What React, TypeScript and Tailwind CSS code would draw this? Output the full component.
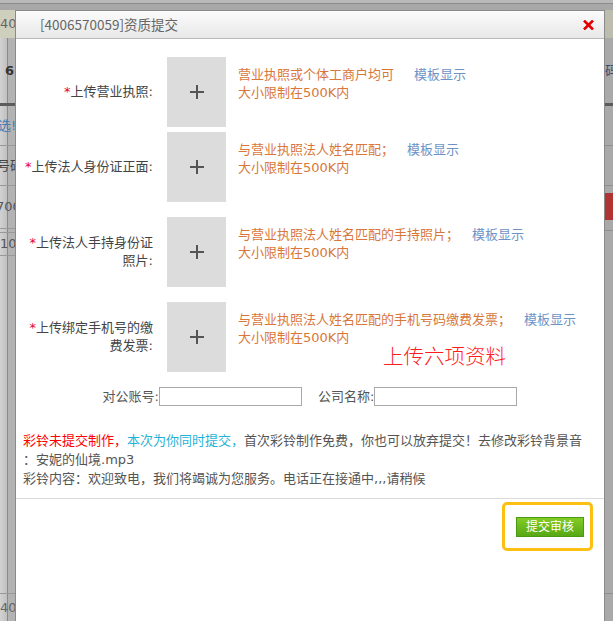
import React from 'react';

interface UploadRow {
  label: string[];
  tip: string;
  linkGap: string;
  mt: string;
  extra?: boolean;
}

const rows: UploadRow[] = [
  { label: ['上传营业执照:'], tip: '营业执照或个体工商户均可', linkGap: 'ml-[20px]', mt: '' },
  { label: ['上传法人身份证正面:'], tip: '与营业执照法人姓名匹配；', linkGap: 'ml-[13px]', mt: 'mt-[5px]' },
  { label: ['上传法人手持身份证', '照片:'], tip: '与营业执照法人姓名匹配的手持照片；', linkGap: 'ml-[13px]', mt: 'mt-[15px]' },
  { label: ['上传绑定手机号的缴', '费发票:'], tip: '与营业执照法人姓名匹配的手机号码缴费发票；', linkGap: 'ml-[13px]', mt: 'mt-[15px]', extra: true },
];

function Plus() {
  return (
    <svg width="14" height="14" viewBox="0 0 14 14">
      <path d="M7 0v14M0 7h14" stroke="#555" strokeWidth="2" />
    </svg>
  );
}

function CloseX() {
  return (
    <svg width="11" height="10" viewBox="0 0 11 10">
      <path d="M1 0.5l9 9M10 0.5l-9 9" stroke="#e30000" strokeWidth="2.6" />
    </svg>
  );
}

// page behind the modal mask, only the thin edges show
function LeftStrip() {
  return (
    <div className="w-[15px] flex flex-col overflow-hidden bg-[linear-gradient(to_right,#d2d2d2_0px,#c0c0c0_7px,#8a8a8a_7px,#8a8a8a_8px,#b3b3b3_8px)] text-[13px] leading-[18px]">
      <div className="h-[28px] shrink-0 flex items-center bg-[#cfcfbd] text-[#666] whitespace-nowrap">40</div>
      <div className="h-[65px] shrink-0 flex items-center pl-[5px] font-bold text-[#333]">6</div>
      <div className="h-[3px] shrink-0 bg-[#5b5b5b]" />
      <div className="h-[39px] shrink-0 flex items-center -ml-[2px] text-[#4b7bb3] whitespace-nowrap">选!</div>
      <div className="h-px shrink-0 bg-[#999]" />
      <div className="h-[39px] shrink-0 flex items-center -ml-[3px] text-[#444] whitespace-nowrap">号码</div>
      <div className="h-px shrink-0 bg-[#999]" />
      <div className="h-[42px] shrink-0 flex items-center -ml-[4px] text-[#555] whitespace-nowrap">700</div>
      <div className="h-px shrink-0 bg-[#999]" />
      <div className="h-[3px] shrink-0" />
      <div className="h-px shrink-0 bg-[#999]" />
      <div className="h-[22px] shrink-0 flex items-center text-[#555] whitespace-nowrap">10</div>
      <div className="h-px shrink-0 bg-[#999]" />
      <div className="h-[337px] shrink-0" />
      <div className="h-px shrink-0 bg-[#999]" />
      <div className="h-[27px] shrink-0 flex items-center text-[#666] whitespace-nowrap">40</div>
    </div>
  );
}

function RightStrip() {
  return (
    <div className="w-[8px] flex flex-col overflow-hidden bg-[#a9a9a9] text-[13px] leading-[18px]">
      <div className="h-[28px] shrink-0 bg-[#bdbdae]" />
      <div className="h-[65px] shrink-0 flex items-center text-[#3a4a70] whitespace-nowrap">码</div>
      <div className="h-[3px] shrink-0 bg-[#5b5b5b]" />
      <div className="h-[39px] shrink-0" />
      <div className="h-px shrink-0 bg-[#8f8f8f]" />
      <div className="h-[39px] shrink-0" />
      <div className="h-px shrink-0 bg-[#8f8f8f]" />
      <div className="h-[7px] shrink-0" />
      <div className="h-[27px] shrink-0 bg-[#b03434]" />
      <div className="h-[10px] shrink-0" />
      <div className="h-px shrink-0 bg-[#8f8f8f]" />
      <div className="h-[362px] shrink-0" />
      <div className="h-px shrink-0 bg-[#8f8f8f]" />
    </div>
  );
}

function Dialog() {
  return (
    <div className="absolute left-[15px] top-[10px] w-[590px] h-[620px] border border-[#8a8a8a] bg-white">
      <div className="h-[28px] flex items-center justify-between pl-[24px] pr-[10px] border-b border-[#b8b8b8] bg-gradient-to-b from-[#fbfbfb] to-[#e8e8e8]">
        <span className="text-[13.5px] text-[#666] font-[family-name:Noto_Sans_CJK_SC,sans-serif]">[4006570059]资质提交</span>
        <CloseX />
      </div>

      <div className="pt-[18px]">
        {rows.map((row, i) => (
          <div key={i} className={`flex ${row.mt}`}>
            <div className="w-[137px] flex items-center justify-end text-right text-[13px] leading-[18px] text-[#444]">
              <div>
                <span className="text-[#e6003c]">*</span>
                {row.label[0]}
                {row.label[1] && (
                  <>
                    <br />
                    {row.label[1]}
                  </>
                )}
              </div>
            </div>
            <div className="ml-[14px] w-[59px] h-[70px] shrink-0 bg-[#dcdcdc] flex items-center justify-center">
              <Plus />
            </div>
            <div className="ml-[12px] pt-[9px] text-[13px] leading-[18px] text-[#d9773a]">
              <div className="flex whitespace-nowrap">
                <span>{row.tip}</span>
                <span className={`${row.linkGap} text-[#6d93c6]`}>模板显示</span>
              </div>
              <div>大小限制在500K内</div>
              {row.extra && (
                <div className="ml-[145px] text-[20.5px] leading-[20px] font-light text-[#ff1c1c]">上传六项资料</div>
              )}
            </div>
          </div>
        ))}

        {/* 对公账号 / 公司名称 */}
        <div className="mt-[15px] flex items-center justify-center text-[13px] text-[#555]">
          <span>对公账号:</span>
          <input className="w-[143px] h-[19px] border border-[#a9a9a9] outline-none" />
          <span className="ml-[16px]">公司名称:</span>
          <input className="w-[143px] h-[19px] border border-[#a9a9a9] outline-none" />
        </div>

        <div className="mt-[24px] px-[7px] text-[13px] leading-[19px] text-[#555]">
          <span className="text-[#ff0000]">彩铃未提交制作，</span>
          <span className="text-[#1fb3d8]">本次为你同时提交，</span>
          首次彩铃制作免费，你也可以放弃提交！去修改彩铃背景音
          <br />
          ：安妮的仙境.mp3
          <br />
          彩铃内容：欢迎致电，我们将竭诚为您服务。电话正在接通中,,,请稍候
        </div>

        <div className="mt-[10px] border-t border-[#dcdcdc]" />

        <div className="flex justify-end pr-[11px] pt-[3px]">
          <div className="border-[3px] border-[#fdbf12] rounded-[5px] pl-[11px] pr-[6px] pt-[9px] pb-[10px]">
            <button className="w-[68px] h-[20px] border border-[#4b9913] bg-gradient-to-b from-[#84cc26] to-[#56a815] text-white text-[12px] leading-[18px]">
              提交审核
            </button>
          </div>
        </div>
      </div>
    </div>
  );
}

export default function App() {
  return (
    <div className="relative w-[613px] h-[621px] overflow-hidden bg-[#ababab] font-[family-name:DejaVu_Sans,Noto_Sans_CJK_SC,sans-serif]">
      <div className="flex flex-col h-full">
        <div className="h-[3px] shrink-0 bg-[#b9b9b9]" />
        <div className="h-px shrink-0 bg-[#8c8c8c]" />
        <div className="h-[6px] shrink-0 bg-[#a8a8a8]" />
        <div className="flex flex-1">
          <LeftStrip />
          <div className="flex-1" />
          <RightStrip />
        </div>
      </div>
      <Dialog />
    </div>
  );
}
